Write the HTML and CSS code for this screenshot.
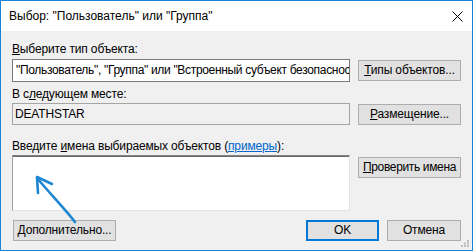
FILE: index.html
```html
<!DOCTYPE html>
<html>
	<head>
		<meta charset="UTF-8">
		<title>Выбор</title>
		<link rel="stylesheet" href="styles.css">
	</head>
	<body>
		<div class="dialog">
			<div class="titlebar">
				<span class="title">Выбор: "Пользователь" или "Группа"</span>
				<svg class="close" width="11" height="11" viewBox="0 0 11 11">
					<path d="M0.5 0.5 L10.5 10.5 M10.5 0.5 L0.5 10.5" stroke="#000" stroke-width="1" fill="none" />
				</svg>
			</div>
			<div class="content">
				<div class="label label-first"><u>В</u>ыберите тип объекта:</div>
				<div class="row row-first">
					<div class="field">"Пользователь", "Группа" или "Встроенный субъект безопаснос</div>
					<div class="btn"><u>Т</u>ипы объектов...</div>
				</div>
				<div class="label label-second">В с<u>л</u>едующем месте:</div>
				<div class="row row-second">
					<div class="field field-ro">DEATHSTAR</div>
					<div class="btn"><u>Р</u>азмещение...</div>
				</div>
				<div class="label label-third">Введите <u>и</u>мена выбираемых объектов (<a href="javascript:void(0)">примеры</a>):</div>
				<div class="row row-third">
					<div class="names"></div>
					<div class="btn btn-check"><u>П</u>роверить имена</div>
				</div>
				<div class="footer">
					<div class="btn btn-more"><u>Д</u>ополнительно...</div>
					<div class="footer-right">
						<div class="btn btn-ok">OK</div>
						<div class="btn btn-cancel">Отмена</div>
					</div>
				</div>
			</div>
			<svg class="arrow" width="60" height="60" viewBox="0 0 60 60">
				<path d="M46 53 C36 40 24 28 8 9" stroke="#1d86d3" stroke-width="2.6" fill="none" stroke-linecap="round" />
				<path d="M23 15 L8 8 L9 24" stroke="#1d86d3" stroke-width="2.6" fill="none" stroke-linecap="round" stroke-linejoin="round" />
			</svg>
			<svg class="grip" width="9" height="7" viewBox="0 0 9 7">
				<rect x="7" y="0" width="2" height="2" fill="#bdbdbd" />
				<rect x="4" y="2.5" width="2" height="2" fill="#bdbdbd" />
				<rect x="7" y="2.5" width="2" height="2" fill="#bdbdbd" />
				<rect x="1" y="5" width="2" height="2" fill="#bdbdbd" />
				<rect x="4" y="5" width="2" height="2" fill="#bdbdbd" />
				<rect x="7" y="5" width="2" height="2" fill="#bdbdbd" />
			</svg>
		</div>
	</body>
</html>
```

FILE: styles.css
```css
* {
	margin: 0;
	padding: 0;
	box-sizing: border-box;
}

body {
	font-family: "Liberation Sans", "Noto Sans", sans-serif;
	font-size: 12px;
	letter-spacing: -0.15px;
	color: #000;
	background: #fff;
}

.dialog {
	position: relative;
	width: 473px;
	height: 251px;
	border: 1px solid #1883d7;
	background-color: #f0f0f0;
	display: flex;
	flex-direction: column;
}

.titlebar {
	height: 30px;
	background-color: #fff;
	display: flex;
	align-items: center;
	justify-content: space-between;
	padding: 0 9px 0 8px;
}

.title {
	font-size: 12px;
	line-height: 15px;
	letter-spacing: 0;
}

.close {
	display: block;
	margin-top: 1px;
}

.content {
	flex: 1;
	padding: 11px 11px 0 11px;
}

.label {
	height: 15px;
	line-height: 15px;
	white-space: nowrap;
}

.label a {
	color: #0066cc;
	text-decoration: underline;
}

.label-second {
	margin-top: 5px;
}

.label-third {
	margin-top: 14px;
}

.row {
	display: flex;
	align-items: center;
	gap: 8px;
}

.row-first {
	margin-top: 2px;
	height: 23px;
}

.row-second {
	margin-top: 1px;
	height: 22px;
}

.row-third {
	margin-top: 1px;
	height: 56px;
	align-items: flex-start;
}

.field {
	flex: 1;
	min-width: 0;
	height: 100%;
	border: 1px solid #7a7a7a;
	background-color: #fff;
	padding: 0 2px 0 3px;
	line-height: 21px;
	white-space: nowrap;
	overflow: hidden;
	letter-spacing: -0.32px;
}

.field-ro {
	background-color: #f0f0f0;
	border-color: #a5a5a5;
	padding: 0 2px;
	line-height: 20px;
	letter-spacing: -0.15px;
}

.names {
	flex: 1;
	height: 100%;
	background-color: #fff;
	border: 1px solid;
	border-color: #828282 #e3e3e3 #e3e3e3 #a0a0a0;
	box-shadow: inset 0 1px 0 #696969;
}

.btn {
	width: 103px;
	height: 21px;
	line-height: 19px;
	text-align: center;
	background-color: #e1e1e1;
	border: 1px solid #adadad;
	white-space: nowrap;
	flex-shrink: 0;
}

.btn-check {
	letter-spacing: -0.35px;
}

.row-third .btn {
	margin-top: 2px;
}

.footer {
	margin-top: 9px;
	display: flex;
	justify-content: space-between;
	align-items: center;
	padding-left: 1px;
}

.footer-right {
	display: flex;
	gap: 8px;
}

.btn-ok {
	width: 73px;
	border: 2px solid #0078d7;
	line-height: 17px;
}

.btn-cancel {
	width: 74px;
}

.arrow {
	position: absolute;
	left: 28px;
	top: 168px;
}

.grip {
	position: absolute;
	right: 3px;
	bottom: 3px;
}
```
